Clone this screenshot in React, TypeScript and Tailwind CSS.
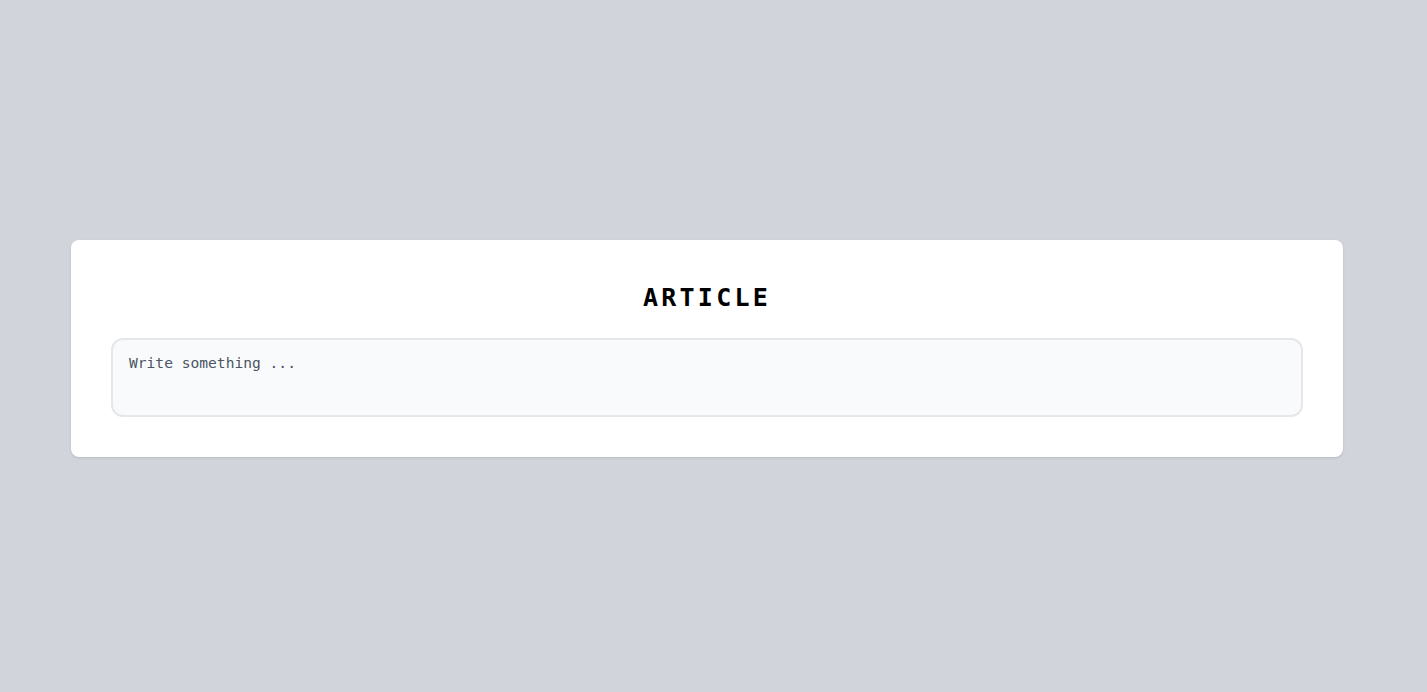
export default function App() {
  return (
    <div className="min-h-screen w-full bg-[#d1d5db] flex items-center pt-[5px]" style={{ fontFamily: '"DejaVu Sans Mono", monospace' }}>
      <div className="ml-[71px] w-[1272px] bg-white rounded-lg shadow-sm px-10 pt-10 pb-10">
        <h1 className="text-center text-[25px] leading-[36px] font-bold tracking-[0.13em] text-black mb-[22px]">ARTICLE</h1>
        <textarea
          className="block w-full h-[79px] resize-none rounded-xl border-2 border-[#e5e7eb] bg-[#f9fafb] px-[16px] py-[12px] text-[14.6px] leading-[22px] text-[#4b5563] placeholder:text-[#4b5563] outline-none"
          placeholder="Write something ..."
        />
      </div>
    </div>
  );
}
